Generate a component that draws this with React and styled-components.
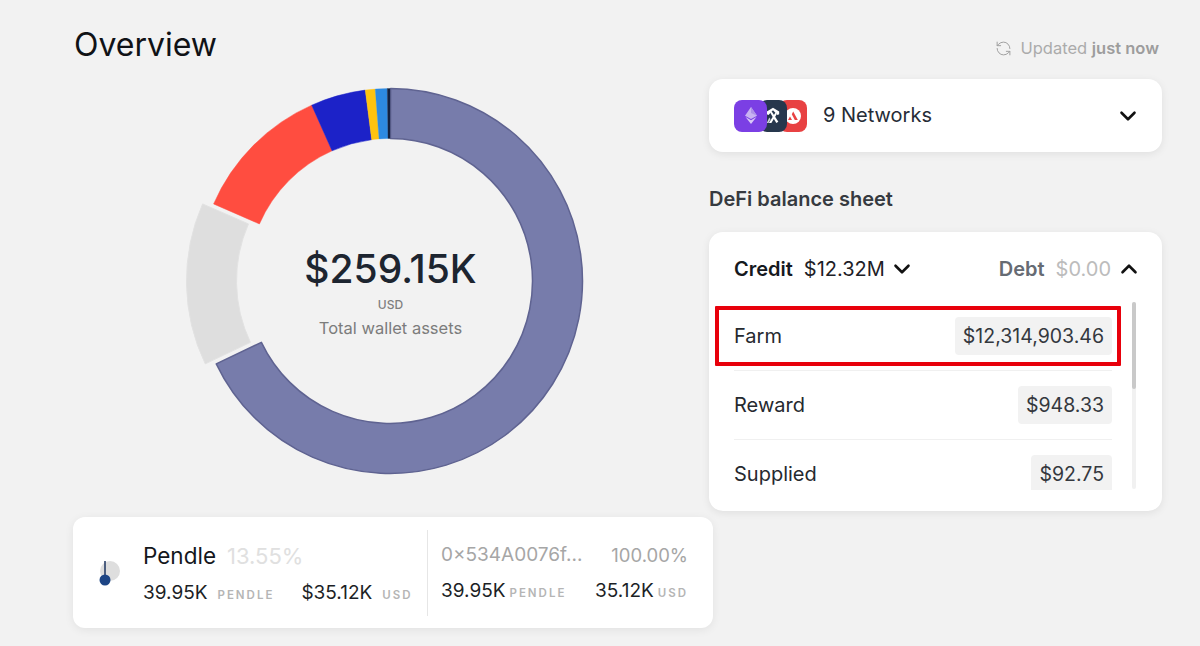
import React from 'react'
import styled, { createGlobalStyle } from 'styled-components'
import { ChevronDown, ChevronUp, RefreshCcw } from 'lucide-react'

const GlobalStyle = createGlobalStyle`
  html, body {
    margin: 0;
    background: #f2f2f2;
    font-family: Inter, "Liberation Sans", sans-serif;
    color: #1c1f26;
    overflow: hidden;
  }
`

const Page = styled.div`
  display: grid;
  grid-template-columns: 635px 453px;
  padding-left: 74px;
  width: 1200px;
  height: 646px;
  box-sizing: border-box;
`

const LeftColumn = styled.div`
  display: flex;
  flex-direction: column;
`

const Title = styled.h1`
  margin: 0;
  height: 80px;
  padding-top: 25px;
  box-sizing: border-box;
  font-size: 32px;
  line-height: 39px;
  font-weight: 400;
  color: #101216;
`

const Chart = styled.div`
  display: grid;
  width: 420px;
  height: 400px;
  margin-left: 106px;
  margin-top: 0.5px;
  & > * {
    grid-area: 1 / 1;
  }
`

const ChartCenter = styled.div`
  display: flex;
  flex-direction: column;
  align-items: center;
  padding-top: 160px;
  padding-left: 1px;
`

const Total = styled.div`
  font-size: 39px;
  line-height: 56px;
  font-weight: 500;
  color: #1d2530;
`

const TotalUnit = styled.div`
  font-size: 12px;
  line-height: 14px;
  font-weight: 500;
  color: #7f7f7f;
  margin-top: 1px;
`

const TotalLabel = styled.div`
  font-size: 16.5px;
  line-height: 20px;
  color: #7c7c7c;
  margin-top: 6px;
`

const TokenCard = styled.div`
  display: flex;
  align-items: center;
  width: 640px;
  height: 111px;
  margin-top: 36px;
  margin-left: -1px;
  background: #fff;
  border-radius: 12px;
  box-shadow: 0 2px 10px rgba(0, 0, 0, 0.07);
`

const TokenIcon = styled.svg`
  width: 30px;
  height: 30px;
  margin-left: 17px;
  margin-top: 2px;
  flex-shrink: 0;
`

const TokenMain = styled.div`
  width: 270px;
  margin-left: 23px;
  margin-top: 1px;
`

const TokenName = styled.div`
  display: flex;
  align-items: baseline;
  gap: 11px;
  font-size: 22.5px;
  line-height: 28px;
  color: #14171c;
`

const TokenShare = styled.span`
  font-size: 22px;
  color: #e0e0e0;
`

const AmountRow = styled.div`
  display: flex;
  justify-content: ${(props) => props.$between ? 'space-between' : 'flex-start'};
  align-items: baseline;
  margin-top: ${(props) => props.$top}px;
`

const Amount = styled.span`
  font-size: 19px;
  line-height: 22px;
  color: #1c1f26;
`

const Unit = styled.span`
  margin-left: ${(props) => props.$gap || 10}px;
  font-size: 11.5px;
  font-weight: 600;
  letter-spacing: 2px;
  color: #b5b5b5;
`

const SecondAmount = styled.span`
  margin-left: 27px;
`

const CardDivider = styled.div`
  width: 1px;
  height: 86px;
  background: #e6e6e6;
  margin-left: 14px;
  margin-top: 1px;
`

const HolderBlock = styled.div`
  width: 247px;
  margin-left: 13px;
  margin-top: 2px;
`

const HolderRow = styled.div`
  display: flex;
  justify-content: space-between;
  font-size: 19px;
  line-height: 22px;
  color: #a6a6a6;
`

const HolderShare = styled.span`
  font-size: 18.5px;
`

const RightColumn = styled.div`
  display: flex;
  flex-direction: column;
`

const Updated = styled.div`
  display: flex;
  align-items: center;
  justify-content: flex-end;
  gap: 8px;
  height: 79px;
  padding: 17px 3px 0 0;
  box-sizing: border-box;
  font-size: 16.5px;
  color: #ababab;
  & b {
    font-weight: 600;
    color: #9d9d9d;
  }
`

const NetworkCard = styled.div`
  display: flex;
  align-items: center;
  height: 73px;
  padding: 0 21px 0 25px;
  background: #fff;
  border-radius: 14px;
  box-shadow: 0 2px 8px rgba(0, 0, 0, 0.08);
`

const LogoStack = styled.div`
  display: flex;
  width: 73px;
  height: 32px;
`

const Logo = styled.div`
  display: flex;
  align-items: center;
  justify-content: center;
  flex-shrink: 0;
  width: ${(props) => props.$width}px;
  height: 32px;
  margin-left: ${(props) => props.$overlap || 0}px;
  border-radius: 8px;
  background: ${(props) => props.$color};
  z-index: ${(props) => props.$layer};
`

const NetworkName = styled.div`
  flex: 1;
  margin-left: 16px;
  margin-top: -2px;
  font-size: 20px;
  color: #262c36;
`

const SheetTitle = styled.h2`
  margin: 0;
  height: 80px;
  padding-top: 35px;
  box-sizing: border-box;
  font-size: 20px;
  line-height: 24px;
  font-weight: 600;
  color: #363a40;
`

const SheetCard = styled.div`
  position: relative;
  height: 279px;
  padding: 0 25px;
  background: #fff;
  border-radius: 14px;
  box-shadow: 0 2px 8px rgba(0, 0, 0, 0.08);
`

const SheetHeader = styled.div`
  display: flex;
  align-items: center;
  height: 70px;
  padding-top: 4px;
  box-sizing: border-box;
`

const HeaderLabel = styled.span`
  font-size: 20px;
  font-weight: 600;
  color: ${(props) => props.$muted ? '#666b73' : '#16191e'};
`

const HeaderValue = styled.span`
  margin-left: 11px;
  font-size: 20px;
  color: ${(props) => props.$muted ? '#bcbcbc' : '#1e2127'};
`

const HeaderSpacer = styled.div`
  flex: 1;
`

const HeaderIcon = styled.span`
  display: flex;
  margin-left: ${(props) => props.$gap}px;
  margin-right: ${(props) => props.$right || 0}px;
`

const ListArea = styled.div`
  display: flex;
  justify-content: space-between;
  height: 188px;
`

const RowList = styled.div`
  width: 378px;
  height: 188px;
  overflow: hidden;
`

const Row = styled.div`
  display: flex;
  align-items: center;
  justify-content: space-between;
  height: 68px;
  border-bottom: 1px solid #f0f0f0;
  font-size: 20px;
  color: #26292f;
`

const Chip = styled.span`
  display: flex;
  align-items: center;
  height: 38px;
  padding: 0 8px;
  border-radius: 4px;
  background: #f2f2f2;
  font-size: 19.5px;
  color: #34383e;
`

const ScrollTrack = styled.div`
  width: 4px;
  height: 187px;
  margin-right: 1px;
  background: #f1f1f1;
  border-radius: 2px;
`

const ScrollThumb = styled.div`
  height: 87px;
  background: #c9c9c9;
  border-radius: 2px;
`

const Highlight = styled.div`
  position: absolute;
  left: 6px;
  top: 74px;
  width: 406px;
  height: 60px;
  box-sizing: border-box;
  border: 4px solid #e8000b;
  border-radius: 1px;
`

const CX = 210
const CY = 200
const OUTER = 192.5
const INNER = 142.5

const polar = (r, deg, dx) => {
  const a = (deg - 90) * Math.PI / 180
  return [CX + dx + r * Math.cos(a), CY + r * Math.sin(a)]
}

const slicePath = (from, to, dx = 0) => {
  const large = to - from > 180 ? 1 : 0
  const [ax, ay] = polar(OUTER, from, dx)
  const [bx, by] = polar(OUTER, to, dx)
  const [cx, cy] = polar(INNER, to, dx)
  const [ex, ey] = polar(INNER, from, dx)
  return `M${ax} ${ay}A${OUTER} ${OUTER} 0 ${large} 1 ${bx} ${by}L${cx} ${cy}A${INNER} ${INNER} 0 ${large} 0 ${ex} ${ey}Z`
}

const slices = [
  { from: 0.2, to: 244.5, fill: '#777cab', stroke: '#5f6391', width: 1.5 },
  { from: 244.5, to: 293.6, fill: '#dedede', stroke: '#e2e2e2', width: 1, dx: -11 },
  { from: 293.6, to: 336, fill: '#ff4d40', stroke: '#ff4d40', width: 0.5 },
  { from: 336, to: 352.6, fill: '#1c22c8', stroke: '#1c22c8', width: 0.5 },
  { from: 352.6, to: 355.6, fill: '#ffc30f', stroke: '#ffc30f', width: 0.3 },
  { from: 355.6, to: 359.2, fill: '#2d8ae0', stroke: '#2d8ae0', width: 0.3 },
  { from: 359.2, to: 360, fill: '#14213d', stroke: '#14213d', width: 0.3 },
]

const Donut = () => (
  <svg width="420" height="400" viewBox="0 0 420 400">
    {slices.map((s) => (
      <path key={s.from} d={slicePath(s.from, s.to, s.dx)} fill={s.fill} stroke={s.stroke} strokeWidth={s.width} strokeLinejoin="round" />
    ))}
  </svg>
)

const EthLogo = () => (
  <svg width="12" height="19" viewBox="0 0 14 20">
    <polygon points="7,0 14,10.2 7,14 0,10.2" fill="#c9b3f2" />
    <polygon points="7,0 14,10.2 7,7.2" fill="#ae92e8" />
    <polygon points="7,15.4 13.4,11.8 7,20 0.6,11.8" fill="#d8c8f6" />
  </svg>
)

const ArbLogo = () => (
  <svg width="14" height="17" viewBox="0 0 17 20">
    <path d="M8.5 0.5 16 5 16 8.5 14 9.5 8.5 3.5 3 9.5 1 8.5 1 5Z" fill="#fff" />
    <path d="M5 6.5 7 5 15 17.5 12.5 19Z" fill="#fff" />
    <path d="M11.5 6.5 13 8.5 6.5 19 3.5 19Z" fill="#fff" />
    <path d="M1 19 4 12.5 5.5 14.5 3 19Z" fill="#cfd4da" />
  </svg>
)

const AvaxLogo = () => (
  <svg width="16" height="16" viewBox="0 0 16 16">
    <circle cx="8" cy="8" r="8" fill="#fff" />
    <path d="M8.2 3.5 12.8 12H9.8L6.8 6.2Z" fill="#e84142" />
    <path d="M5 8.5 7 12H3Z" fill="#e84142" />
  </svg>
)

const rows = [
  { label: 'Farm', value: '$12,314,903.46' },
  { label: 'Reward', value: '$948.33' },
  { label: 'Supplied', value: '$92.75' },
]

const App = () => {
  return (
    <Page>
      <GlobalStyle />
      <LeftColumn>
        <Title>Overview</Title>
        <Chart>
          <Donut />
          <ChartCenter>
            <Total>$259.15K</Total>
            <TotalUnit>USD</TotalUnit>
            <TotalLabel>Total wallet assets</TotalLabel>
          </ChartCenter>
        </Chart>
        <TokenCard>
          <TokenIcon viewBox="0 0 30 30">
            <circle cx="20" cy="13" r="10" fill="#dedede" />
            <line x1="15" y1="3" x2="15" y2="22" stroke="#1c3560" strokeWidth="1.5" />
            <circle cx="15" cy="22" r="5.5" fill="#1d4585" />
          </TokenIcon>
          <TokenMain>
            <TokenName>
              Pendle
              <TokenShare>13.55%</TokenShare>
            </TokenName>
            <AmountRow $top={12}>
              <Amount>39.95K</Amount>
              <Unit>PENDLE</Unit>
              <SecondAmount><Amount>$35.12K</Amount></SecondAmount>
              <Unit>USD</Unit>
            </AmountRow>
          </TokenMain>
          <CardDivider />
          <HolderBlock>
            <HolderRow>
              <span>0×534A0076f...</span>
              <HolderShare>100.00%</HolderShare>
            </HolderRow>
            <AmountRow $between $top={14}>
              <span>
                <Amount>39.95K</Amount>
                <Unit $gap={4}>PENDLE</Unit>
              </span>
              <span>
                <Amount>35.12K</Amount>
                <Unit $gap={4}>USD</Unit>
              </span>
            </AmountRow>
          </HolderBlock>
        </TokenCard>
      </LeftColumn>
      <RightColumn>
        <Updated>
          <RefreshCcw size={17} strokeWidth={1.4} color="#a0a0a0" />
          <span>Updated <b>just now</b></span>
        </Updated>
        <NetworkCard>
          <LogoStack>
            <Logo $width={33} $color="#7b3fe4" $layer={3}><EthLogo /></Logo>
            <Logo $width={28} $overlap={-8} $color="#27374d" $layer={2}><ArbLogo /></Logo>
            <Logo $width={28} $overlap={-8} $color="#e84142" $layer={1}><AvaxLogo /></Logo>
          </LogoStack>
          <NetworkName>9 Networks</NetworkName>
          <ChevronDown size={26} strokeWidth={2.4} color="#111" />
        </NetworkCard>
        <SheetTitle>DeFi balance sheet</SheetTitle>
        <SheetCard>
          <SheetHeader>
            <HeaderLabel>Credit</HeaderLabel>
            <HeaderValue>$12.32M</HeaderValue>
            <HeaderIcon $gap={4}><ChevronDown size={26} strokeWidth={2.4} color="#111" /></HeaderIcon>
            <HeaderSpacer />
            <HeaderLabel $muted>Debt</HeaderLabel>
            <HeaderValue $muted>$0.00</HeaderValue>
            <HeaderIcon $gap={5} $right={-5}><ChevronUp size={26} strokeWidth={2.4} color="#111" /></HeaderIcon>
          </SheetHeader>
          <ListArea>
            <RowList>
              {rows.map((r) => (
                <Row key={r.label}>
                  <span>{r.label}</span>
                  <Chip>{r.value}</Chip>
                </Row>
              ))}
            </RowList>
            <ScrollTrack><ScrollThumb /></ScrollTrack>
          </ListArea>
          <Highlight />
        </SheetCard>
      </RightColumn>
    </Page>
  )
}

export default App
